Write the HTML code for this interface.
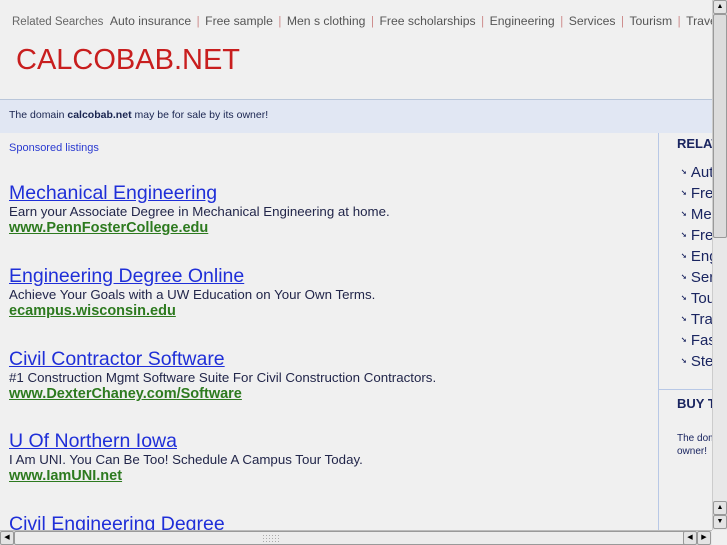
<!DOCTYPE html>
<html><head><meta charset="utf-8"><style>
*{margin:0;padding:0;box-sizing:border-box}
html,body{width:727px;height:545px;overflow:hidden;background:#f0f0f0;font-family:"Liberation Sans",sans-serif;position:relative}
.a{position:absolute;white-space:nowrap}
.rs{top:14px;left:12px;font-size:11.5px;color:#666}
.rs span.l{font-size:12.2px;color:#555}
.rs i{font-style:normal;color:#c88;margin:0 5.5px}
.title{top:44px;left:16px;font-size:29px;color:#c81e1e}
.band{top:99px;left:0;width:712px;height:34px;background:#e1e7f3;border-top:1px solid #b9c6da}
.band p{position:absolute;top:9px;left:9px;font-size:10.5px;color:#1a2550}
.sp{top:142px;left:9px;font-size:11px;color:#2a3ad0}
.lt{left:9px;font-size:19.5px;color:#1f2fd8;text-decoration:underline}
.ld{left:9px;font-size:13.3px;color:#22264a}
.lu{left:9px;font-size:14.5px;font-weight:bold;color:#2d7a1f;text-decoration:underline}
.vl{left:658px;top:133px;width:1px;height:397px;background:#b8c8e6}
.hl{left:658px;top:389px;width:54px;height:1px;background:#b8c8e6}
.sh{left:677px;font-size:13px;font-weight:bold;color:#1a2560}
.si{left:681px;font-size:15px;color:#1a2560}
.si b{font-size:7px;color:#1a2560;margin-right:4px;vertical-align:3px}
.st{left:677px;font-size:10px;color:#1a2560;line-height:13px}
.vs{left:712px;top:0;width:15px;height:530px;background:#e8e8e8;border-left:1px solid #ccc}
.thumb{left:713px;top:14px;width:14px;height:224px;background:#dcdcdc;border:1px solid #999;border-radius:2px}
.btn{width:14px;height:14px;background:#e4e4e4;border:1px solid #999;font-size:7px;text-align:center;line-height:12px;color:#000;border-radius:2px}
.hs{left:0;top:530px;width:712px;height:15px;background:#e8e8e8;border-top:1px solid #bbb}
.hthumb{left:14px;top:531px;width:682px;height:14px;background:#ececec;border:1px solid #999;border-radius:2px}
.grip{left:262px;top:534px;width:18px;height:8px;background-image:radial-gradient(#aaa 0.6px,transparent 0.7px);background-size:3px 3px}
</style></head><body>
<div class="a rs">Related Searches &nbsp;<span class="l">Auto insurance</span><i>|</i><span class="l">Free sample</span><i>|</i><span class="l">Men s clothing</span><i>|</i><span class="l">Free scholarships</span><i>|</i><span class="l">Engineering</span><i>|</i><span class="l">Services</span><i>|</i><span class="l">Tourism</span><i>|</i><span class="l">Travel</span></div>
<div class="a title">CALCOBAB.NET</div>
<div class="a band"><p>The domain <b>calcobab.net</b> may be for sale by its owner!</p></div>
<div class="a sp">Sponsored listings</div>

<div class="a lt" style="top:182px">Mechanical Engineering</div>
<div class="a ld" style="top:204px">Earn your Associate Degree in Mechanical Engineering at home.</div>
<div class="a lu" style="top:220px">www.PennFosterCollege.edu</div>

<div class="a lt" style="top:265px">Engineering Degree Online</div>
<div class="a ld" style="top:287px">Achieve Your Goals with a UW Education on Your Own Terms.</div>
<div class="a lu" style="top:303px">ecampus.wisconsin.edu</div>

<div class="a lt" style="top:348px">Civil Contractor Software</div>
<div class="a ld" style="top:370px">#1 Construction Mgmt Software Suite For Civil Construction Contractors.</div>
<div class="a lu" style="top:386px">www.DexterChaney.com/Software</div>

<div class="a lt" style="top:430px">U Of Northern Iowa</div>
<div class="a ld" style="top:452px">I Am UNI. You Can Be Too! Schedule A Campus Tour Today.</div>
<div class="a lu" style="top:468px">www.IamUNI.net</div>

<div class="a lt" style="top:513px">Civil Engineering Degree</div>

<div class="a vl"></div><div class="a hl"></div>
<div class="a sh" style="top:136px">RELATED</div>
<div class="a si" style="top:164px"><b>➘</b>Auto</div>
<div class="a si" style="top:185px"><b>➘</b>Free</div>
<div class="a si" style="top:206px"><b>➘</b>Men</div>
<div class="a si" style="top:227px"><b>➘</b>Free</div>
<div class="a si" style="top:248px"><b>➘</b>Engi</div>
<div class="a si" style="top:269px"><b>➘</b>Serv</div>
<div class="a si" style="top:290px"><b>➘</b>Tour</div>
<div class="a si" style="top:311px"><b>➘</b>Trav</div>
<div class="a si" style="top:332px"><b>➘</b>Fash</div>
<div class="a si" style="top:353px"><b>➘</b>Stee</div>
<div class="a sh" style="top:396px">BUY THIS</div>
<div class="a st" style="top:432px">The domain<br>owner!</div>

<div class="a vs"></div>
<div class="a btn" style="left:713px;top:0">▲</div>
<div class="a thumb"></div>
<div class="a btn" style="left:713px;top:501px">▲</div>
<div class="a btn" style="left:713px;top:515px">▼</div>
<div class="a hs"></div>
<div class="a btn" style="left:0;top:531px">◀</div>
<div class="a hthumb"></div>
<div class="a grip"></div>
<div class="a btn" style="left:683px;top:531px">◀</div>
<div class="a btn" style="left:697px;top:531px">▶</div>
</body></html>
